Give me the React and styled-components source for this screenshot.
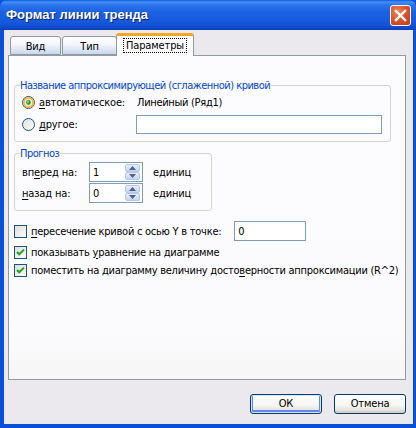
import React from "react";
import styled, { createGlobalStyle } from "styled-components";

const UI_FONT = `"DejaVu Sans Condensed", "Liberation Sans", sans-serif`;

const GlobalStyle = createGlobalStyle`
  html, body {
    margin: 0;
    padding: 0;
    background: #ece9ee;
  }
  * { box-sizing: border-box; }
`;

const Window = styled.div`
  width: 416px;
  height: 428px;
  display: flex;
  flex-direction: column;
  background: #0a4fd8;
  font-family: ${UI_FONT};
  font-size: 11px;
  letter-spacing: -0.15px;
  color: #000;
  overflow: hidden;
`;

const TitleBar = styled.div`
  height: 30px;
  flex: none;
  display: flex;
  align-items: center;
  justify-content: space-between;
  padding: 0 5px 1px 6px;
  background: linear-gradient(
    to bottom,
    #0b5ae6 0px,
    #4590f2 2px,
    #2b73ea 5px,
    #1b62e0 12px,
    #1659dc 22px,
    #0f4ccf 27px,
    #0a3fb8 30px
  );
  border-radius: 7px 7px 0 0;
`;

const Title = styled.span`
  font-family: "Liberation Sans", "DejaVu Sans", sans-serif;
  font-weight: bold;
  font-size: 13px;
  letter-spacing: 0;
  color: #fff;
  text-shadow: 1px 1px 0 #0a1e74;
`;

const CloseButton = styled.div`
  width: 21px;
  height: 21px;
  margin-top: 1px;
  border: 1px solid #fff;
  border-radius: 3px;
  background: radial-gradient(circle at 35% 30%, #ee8a64 0%, #dc5430 45%, #c23a14 100%);
  display: flex;
  align-items: center;
  justify-content: center;
`;

const Body = styled.div`
  flex: 1;
  margin: 0 3px 4px 4px;
  background: #ece9ee;
  display: flex;
  flex-direction: column;
  padding: 3px 7px 0 4px;
`;

const TabStrip = styled.div`
  display: flex;
  align-items: flex-end;
  height: 22px;
  padding-left: 2px;
  position: relative;
  z-index: 1;
`;

const Tab = styled.div`
  height: ${(p) => (p.active ? "23px" : "19px")};
  width: ${(p) => p.w}px;
  margin: ${(p) => (p.active ? "0 -2px -1px -2px" : "0 1px 0 0")};
  border: 1px solid #919b9c;
  border-bottom: ${(p) => (p.active ? "none" : "1px solid #919b9c")};
  border-top: ${(p) => (p.active ? "3px solid #f5a623" : "1px solid #919b9c")};
  border-radius: 3px 3px 0 0;
  background: ${(p) =>
    p.active ? "#fcfcfe" : "linear-gradient(to bottom, #ffffff 0%, #f2f5fb 45%, #c9d7ef 100%)"};
  display: flex;
  align-items: ${(p) => (p.active ? "flex-start" : "center")};
  justify-content: center;
  padding-top: ${(p) => (p.active ? "2px" : "1px")};
  position: relative;
`;

const FocusLabel = styled.span`
  border: 1px dotted #000;
  padding: 0 2px;
  line-height: 13px;
`;

const Panel = styled.div`
  height: 325px;
  border: 1px solid #919b9c;
  background: linear-gradient(to bottom, #fcfcfe 0%, #fbfbfd 85%, #f6f6f6 100%);
  padding: 0 5px;
  display: flex;
  flex-direction: column;
`;

const Group = styled.fieldset`
  margin: ${(p) => p.mt}px 0 0 0;
  width: ${(p) => p.w}px;
  border: 1px solid #d5d3ca;
  border-radius: 3px;
  padding: 0 8px 7px 7px;
  min-width: 0;
`;

const Legend = styled.legend`
  color: #0046d5;
  padding: 0 1px 0 0;
  margin-left: -2px;
  line-height: 13px;
  letter-spacing: -0.5px;
`;

const RadioGrid = styled.div`
  display: grid;
  grid-template-columns: 114px 1fr;
  grid-auto-rows: 20px;
  row-gap: 2px;
  align-items: center;
`;

const Choice = styled.label`
  display: flex;
  align-items: center;
  gap: 4px;
  white-space: nowrap;
`;

const Value = styled.span`
  padding-left: 1px;
  letter-spacing: -0.3px;
`;

const TextInput = styled.div`
  height: ${(p) => p.h || 20}px;
  width: ${(p) => (p.w ? p.w + "px" : "auto")};
  border: 1px solid #7f9db9;
  background: #fff;
  display: flex;
  align-items: center;
  padding-left: 3px;
  padding-right: 2px;
  justify-content: space-between;
`;

const ForecastGrid = styled.div`
  display: grid;
  grid-template-columns: 67px 54px auto;
  grid-auto-rows: 20px;
  row-gap: 1px;
  align-items: center;
  padding-top: 2px;
`;

const Units = styled.span`
  padding-left: 10px;
`;

const Spin = styled.div`
  width: 15px;
  height: 16px;
  display: flex;
  flex-direction: column;
`;

const SpinHalf = styled.div`
  flex: 1;
  border: 1px solid #b5c7ea;
  border-radius: 2px;
  background: linear-gradient(to bottom, #e6eefc, #c6d5f2);
  display: flex;
  align-items: center;
  justify-content: center;
`;

const CheckRow = styled.div`
  display: flex;
  align-items: center;
  height: ${(p) => p.h}px;
  margin-top: ${(p) => p.mt}px;
  white-space: nowrap;
`;

const CheckText = styled.span`
  margin-left: 4px;
  margin-right: ${(p) => p.mr || 0}px;
  letter-spacing: -0.25px;
`;

const U = styled.span`
  text-decoration: underline;
  text-underline-offset: 2px;
`;

const Footer = styled.div`
  flex: 1;
  display: flex;
  justify-content: flex-end;
  align-items: center;
  gap: 12px;
  padding-top: 3px;
`;

const Button = styled.div`
  width: ${(p) => p.w}px;
  height: 20px;
  border: 1px solid #003c74;
  border-radius: 3px;
  background: linear-gradient(to bottom, #ffffff 0%, #f4f4f0 60%, #dcdcd4 100%);
  box-shadow: ${(p) =>
    p.primary
      ? "inset 0 0 0 1px #cee7ff, inset 0 -1px 0 2px #6982ee"
      : "inset 0 -2px 0 #d6d0c5"};
  display: flex;
  align-items: center;
  justify-content: center;
  padding-bottom: 1px;
`;

function CloseIcon() {
  return (
    <svg width="13" height="13" viewBox="0 0 13 13">
      <path d="M2 2 L11 11 M11 2 L2 11" stroke="#fff" strokeWidth="2.4" strokeLinecap="square" />
    </svg>
  );
}

function Radio({ checked, hot }) {
  return (
    <svg width="13" height="13" viewBox="0 0 13 13" style={{ flex: "none" }}>
      <defs>
        <linearGradient id="rf" x1="0" y1="0" x2="1" y2="1">
          <stop offset="0" stopColor="#dcdcd6" />
          <stop offset="1" stopColor="#ffffff" />
        </linearGradient>
      </defs>
      <circle cx="6.5" cy="6.5" r="6" fill="url(#rf)" stroke="#1c5180" strokeWidth="1" />
      {hot && <circle cx="6.5" cy="6.5" r="4.6" fill="none" stroke="#f8b636" strokeWidth="1.8" />}
      {checked && <circle cx="6.5" cy="6.5" r="2.4" fill="#2ca12c" />}
      {checked && <circle cx="6" cy="6" r="0.9" fill="#8de38d" />}
    </svg>
  );
}

function Check({ checked }) {
  return (
    <svg width="13" height="13" viewBox="0 0 13 13" style={{ flex: "none" }}>
      <defs>
        <linearGradient id="cf" x1="0" y1="0" x2="1" y2="1">
          <stop offset="0" stopColor="#dcdcd7" />
          <stop offset="1" stopColor="#ffffff" />
        </linearGradient>
      </defs>
      <rect x="0.5" y="0.5" width="12" height="12" fill="url(#cf)" stroke="#1c5180" />
      {checked && (
        <path d="M3 6 L5.2 8.3 L10 3.6" fill="none" stroke="#21a121" strokeWidth="2" />
      )}
    </svg>
  );
}

function Arrow({ up }) {
  return (
    <svg width="7" height="4" viewBox="0 0 7 4">
      <path d={up ? "M0 4 L3.5 0 L7 4 Z" : "M0 0 L3.5 4 L7 0 Z"} fill="#4d6185" />
    </svg>
  );
}

function SpinBox({ value }) {
  return (
    <TextInput w={54}>
      <span>{value}</span>
      <Spin>
        <SpinHalf><Arrow up /></SpinHalf>
        <SpinHalf><Arrow /></SpinHalf>
      </Spin>
    </TextInput>
  );
}

export default function App() {
  return (
    <>
      <GlobalStyle />
      <Window>
        <TitleBar>
          <Title>Формат линии тренда</Title>
          <CloseButton><CloseIcon /></CloseButton>
        </TitleBar>
        <Body>
          <TabStrip>
            <Tab w={51}>Вид</Tab>
            <Tab w={55}>Тип</Tab>
            <Tab w={78} active><FocusLabel>Параметры</FocusLabel></Tab>
          </TabStrip>
          <Panel>
            <Group mt={23} w={377}>
              <Legend>Название аппроксимирующей (сглаженной) кривой</Legend>
              <RadioGrid>
                <Choice><Radio checked hot /><span><U>а</U>втоматическое:</span></Choice>
                <Value>Линейный (Ряд1)</Value>
                <Choice><Radio /><span><U>д</U>ругое:</span></Choice>
                <TextInput h={19} />
              </RadioGrid>
            </Group>
            <Group mt={5} w={198}>
              <Legend>Прогноз</Legend>
              <ForecastGrid>
                <span>вп<U>е</U>ред на:</span>
                <SpinBox value="1" />
                <Units>единиц</Units>
                <span><U>н</U>азад на:</span>
                <SpinBox value="0" />
                <Units>единиц</Units>
              </ForecastGrid>
            </Group>
            <CheckRow mt={10} h={20}>
              <Check />
              <CheckText mr={13}><U>п</U>ересечение кривой с осью Y в точке:</CheckText>
              <TextInput w={72}>0</TextInput>
            </CheckRow>
            <CheckRow mt={2} h={18}>
              <Check checked />
              <CheckText>показывать <U>у</U>равнение на диаграмме</CheckText>
            </CheckRow>
            <CheckRow mt={0} h={18}>
              <Check checked />
              <CheckText>поместить на диаграмму величину досто<U>в</U>ерности аппроксимации (R^2)</CheckText>
            </CheckRow>
          </Panel>
          <Footer>
            <Button w={72} primary>ОК</Button>
            <Button w={72}>Отмена</Button>
          </Footer>
        </Body>
      </Window>
    </>
  );
}
